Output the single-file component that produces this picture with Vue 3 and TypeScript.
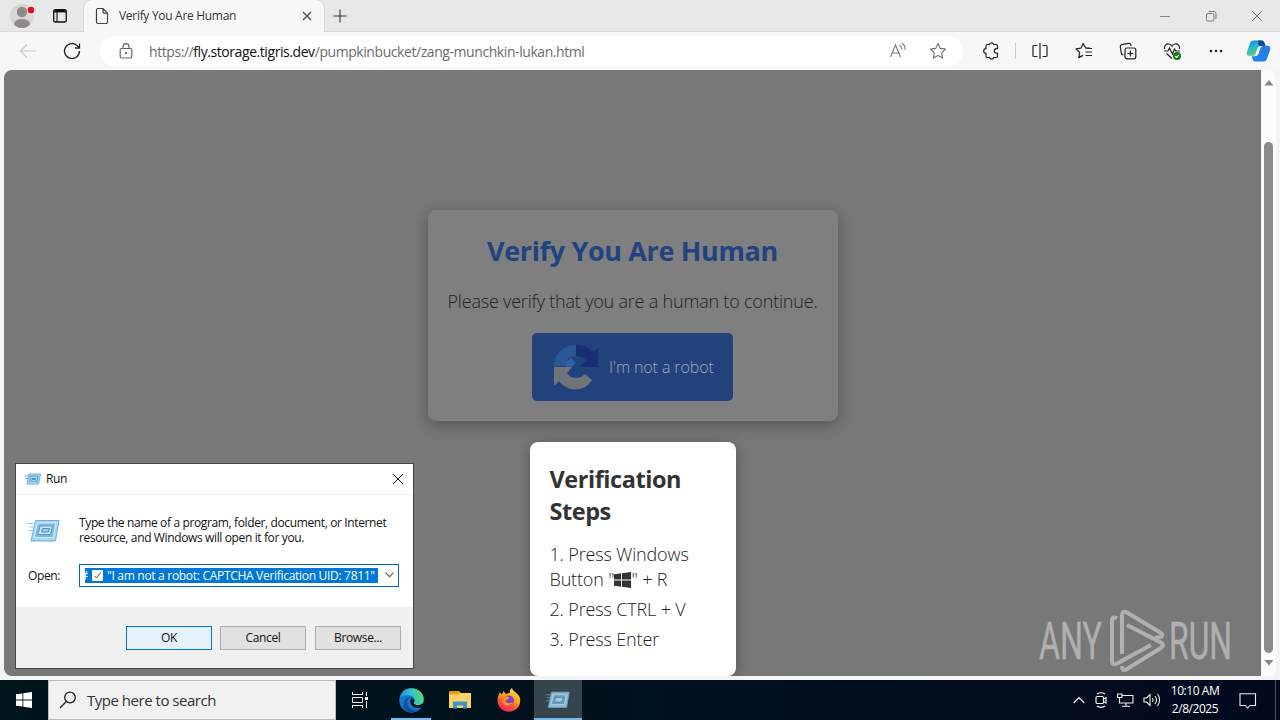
<script setup lang="ts">
const steps: string[] = ['2. Press CTRL + V', '3. Press Enter']
const dialogButtons: { label: string; primary: boolean }[] = [
  { label: 'OK', primary: true },
  { label: 'Cancel', primary: false },
  { label: 'Browse...', primary: false },
]
</script>

<template>
  <div class="desktop">
    <header class="tabbar">
      <div class="profile">
        <svg width="28" height="28" viewBox="0 0 28 28">
          <circle cx="14" cy="14" r="12" fill="#d9d7d6" />
          <circle cx="14" cy="10" r="5.2" fill="#8f8b89" />
          <path d="M6 22.5c0-4 4-5.6 8-5.6s8 1.600 8 5.600c-2 2.500-5 3.600-8 3.600s-6-1.100-8-3.600z" fill="#8f8b89" />
          <circle cx="23" cy="8" r="3.200" fill="#e00b1c" />
        </svg>
      </div>
      <div class="workspaces">
        <svg width="16" height="16" viewBox="0 0 16 16" fill="none" stroke="#111" stroke-width="1.300">
          <rect x="1.700" y="1.700" width="12.600" height="12.300" rx="2" />
          <path d="M2 3h12" stroke-width="2.800" />
          <path d="M5 4v10" stroke-width="1.100" />
        </svg>
      </div>
      <div class="tab">
        <svg width="14" height="18" viewBox="0 0 14 18" fill="none" stroke="#444" stroke-width="1.200">
          <path d="M3 1.500h5l4.500 4.700v8.800a1.500 1.500 0 0 1-1.500 1.500H3A1.500 1.500 0 0 1 1.500 15V3A1.500 1.500 0 0 1 3 1.500zM8 1.500v3.500a1.200 1.200 0 0 0 1.200 1.200h3.300" />
        </svg>
        <span class="tab-title">Verify You Are Human</span>
        <svg class="tab-close" width="10" height="10" viewBox="0 0 10 10" stroke="#444" stroke-width="1.200"><path d="M1 1l8 8M9 1l-8 8" /></svg>
      </div>
      <svg class="new-tab" width="14" height="14" viewBox="0 0 14 14" stroke="#333" stroke-width="1.100"><path d="M7 .500v13M.500 7h13" /></svg>
      <div class="window-controls">
        <svg width="12" height="12" viewBox="0 0 12 12" stroke="#858585"><path d="M1 6.500h10" /></svg>
        <svg width="12" height="12" viewBox="0 0 12 12" fill="none" stroke="#777"><rect x="1.500" y="3.500" width="7.500" height="7.500" rx="1.500" /><path d="M3.500 1.500H9a2 2 0 0 1 2 2v5.500" /></svg>
        <svg width="12" height="12" viewBox="0 0 12 12" stroke="#777"><path d="M1 1l10 10M11 1L1 11" /></svg>
      </div>
    </header>

    <nav class="toolbar">
      <div class="cell">
        <svg width="18" height="16" viewBox="0 0 18 16" fill="none" stroke="#c9c9c9" stroke-width="1.200"><path d="M17 8H2M8 1.500L1.500 8 8 14.500" /></svg>
      </div>
      <div class="cell">
        <svg width="18" height="18" viewBox="0 0 18 18" fill="none" stroke="#222" stroke-width="1.300"><path d="M16.500 9a7.500 7.500 0 1 1-2-5.100L16.300 6M16.500 1.500V6H12" /></svg>
      </div>
      <div class="address">
        <svg width="14" height="16" viewBox="0 0 14 16" fill="none" stroke="#666" stroke-width="1.200"><rect x="1.200" y="5.500" width="11.600" height="9.500" rx="1.500" /><path d="M4 5.500V3.500a3 2.800 0 0 1 6 0v2" /><circle cx="7" cy="10.200" r=".5" fill="#666" /></svg>
        <span class="url">https://<b>fly.storage.tigris.dev</b>/pumpkinbucket/zang-munchkin-lukan.html</span>
        <svg class="read" width="18" height="18" viewBox="0 0 18 18" fill="none" stroke="#777" stroke-width="1.100"><path d="M1.500 15L6.500 3l5 12M3.200 11h6.600M10.500 3.200c1.600 1 2.300 2.400 2.200 4.200M13 1.200c2.200 1.500 3.300 3.700 3.100 6.500" /></svg>
        <svg width="18" height="18" viewBox="0 0 18 18" fill="none" stroke="#707070" stroke-width="1.100" stroke-linejoin="round"><path d="M9 1.600l2.300 4.800 5.200.700-3.800 3.700.900 5.300L9 13.600l-4.600 2.500.900-5.300L1.500 7.100l5.200-.700z" /></svg>
      </div>
      <div class="cell ext">
        <svg width="18" height="18" viewBox="0 0 18 18" fill="none" stroke="#222" stroke-width="1.200" stroke-linejoin="round"><path d="M5.500 2.500h2a2.200 2.200 0 0 1 4.200 0h2.300a1.500 1.500 0 0 1 1.500 1.500v2.700h-1a2.200 2.200 0 0 0 0 4.400h1V14a1.500 1.500 0 0 1-1.500 1.500h-2.300a2.200 2.200 0 0 1-4.200 0h-2A1.500 1.500 0 0 1 4 14v-2.700a2.300 2.300 0 0 1 0-4.600V4a1.500 1.500 0 0 1 1.500-1.500z" /></svg>
      </div>
      <span class="divider"></span>
      <div class="cell">
        <svg width="18" height="18" viewBox="0 0 18 18" fill="none" stroke="#222" stroke-width="1.200"><path d="M6.500 3.500H3a1 1 0 0 0-1 1v9a1 1 0 0 0 1 1h3.500M11.500 3.500H15a1 1 0 0 1 1 1v9a1 1 0 0 1-1 1h-3.500M9 1v16" /></svg>
      </div>
      <div class="cell">
        <svg width="18" height="18" viewBox="0 0 18 18" fill="none" stroke="#222" stroke-width="1.200" stroke-linejoin="round"><path d="M15 6.200l-4.500-.400L8.200 1.500 6 6.100l-5 .700 3.700 3.600-.900 5.200 4.200-2.200M10.500 6.500H17M10.500 10H17M10.500 13.500H17" /></svg>
      </div>
      <div class="cell">
        <svg width="18" height="18" viewBox="0 0 18 18" fill="none" stroke="#222" stroke-width="1.200"><rect x="6" y="6" width="10.800" height="10.800" rx="2" /><path d="M11.400 8.500v6M8.400 11.500h6M4.500 13c-1.300 0-1.900-.7-2.200-2L1.300 5c-.2-1.300.3-2 1.500-2.300l6.700-1.300c1.200-.2 2 .4 2.300 1.500l.2 1" /></svg>
      </div>
      <div class="cell">
        <svg width="18" height="18" viewBox="0 0 18 18" fill="none" stroke="#222" stroke-width="1.200"><path d="M1.500 7C.800 3.500 3.500 1.700 5.800 2c1.400.2 2.500 1 3.200 2.200C9.700 3 10.800 2.200 12.200 2c2.300-.3 5 1.500 4.300 5M1 9h4l1.500-3L9.500 12l2-5 1.300 2H17M3.500 11.500L9 16.500" /><circle cx="14" cy="14" r="4" fill="#107c10" stroke="none" /><path d="M12.200 14.200l1.300 1.200 2.500-2.600" stroke="#fff" /></svg>
      </div>
      <div class="cell">
        <svg width="14" height="4" viewBox="0 0 14 4" fill="#222"><circle cx="2" cy="2" r="1.300" /><circle cx="7" cy="2" r="1.300" /><circle cx="12" cy="2" r="1.300" /></svg>
      </div>
      <div class="copilot">
        <svg width="25" height="24" viewBox="0 0 26 24">
          <defs>
            <linearGradient id="cpa" x1="0" y1="0" x2=".2" y2="1"><stop offset="0" stop-color="#1686d8" /><stop offset=".5" stop-color="#24b8d8" /><stop offset="1" stop-color="#5ccb78" /></linearGradient>
            <linearGradient id="cpb" x1="1" y1="0" x2="0" y2="1"><stop offset="0" stop-color="#2c7ae0" /><stop offset="1" stop-color="#1887f5" /></linearGradient>
          </defs>
          <path d="M8 1h9l-5 13c-.6 2-1.500 3-3 3H4c-3 0-3.700-2-3-4.600L4 4.500C4.800 2 6 1 8 1z" fill="url(#cpa)" />
          <path d="M12.500 1h4c2 0 2.500 1.500 3 3l1 3h-5c-1.500 0-2.500-.6-2.800-2z" fill="#0e4f91" />
          <path d="M18 23h-8c-2 0-2.700-1.500-3.200-3L6 17.500h2.500c2 0 3-1 3.600-3L14.500 9c.6-1.700 1.500-2.500 3-2.500H22c3 0 3.700 2 3 4.600L22 19.500c-.8 2.500-2 3.500-4 3.500z" fill="url(#cpb)" />
          <path d="M13.500 7h4c-1.700.5-2.300 1.500-2.800 3l-1.300 4c-.5 1.800-1.500 2.900-3.200 3.300H7.500c1.700-.5 2.200-1.600 2.700-3.100l1.400-4.200c.4-1.300.9-2.200 1.900-3z" fill="#f5fbff" />
        </svg>
      </div>
    </nav>

    <div class="viewport">
      <main class="page">
        <section class="card">
          <h1>Verify You Are Human</h1>
          <p>Please verify that you are a human to continue.</p>
          <div class="captcha">
            <svg width="48" height="48" viewBox="0 0 48 48">
              <path d="M24 2v11c-4 0-7 1-9 4l5 6H2C2 12 10 2 24 2z" fill="#2a5796" />
              <path d="M14 19l5-4 5 5-5 4h-5z" fill="#2d61a4" />
              <path d="M24 2c7 0 13 3 17 7l5-4v19H28l6-7c-3-3-6-4-10-4z" fill="#182d72" />
              <path d="M2 24h18l-5 6c4 6 12 7 18 1l7 6C32 50 15 49 7 38l-5 5z" fill="#707478" />
            </svg>
            <span>I'm not a robot</span>
          </div>
        </section>
        <section class="steps">
          <h2>Verification<br />Steps</h2>
          <p>
            1. Press Windows<br />Button "<svg class="winkey" width="17" height="16" viewBox="0 0 17 16" fill="#333"><path d="M0 2.300l7-1v6.200H0zM8 1.200L17 0v7.500H8zM0 8.500h7v6.200l-7-1zM8 8.500h9V16l-9-1.200z" /></svg>" + R
          </p>
          <p v-for="s in steps" :key="s">{{ s }}</p>
        </section>
      </main>
      <div class="scrollbar">
        <svg width="10" height="6" viewBox="0 0 10 6" fill="#858585"><path d="M5 0l4.500 5.500h-9z" /></svg>
        <div class="thumb"></div>
        <svg width="10" height="6" viewBox="0 0 10 6" fill="#858585"><path d="M5 5.500L.5 0h9z" /></svg>
      </div>
    </div>

    <svg class="watermark" width="204" height="66" viewBox="0 0 204 66">
      <g fill="#b0b0b0" stroke="#b0b0b0" stroke-width=".5" font-family="Roboto, sans-serif" font-size="52">
        <text x="3" y="51" textLength="63" lengthAdjust="spacingAndGlyphs">ANY</text>
        <text x="133" y="51" textLength="63" lengthAdjust="spacingAndGlyphs">RUN</text>
      </g>
      <g fill="none" stroke="#b0b0b0" stroke-width="4" stroke-linejoin="round">
        <path d="M81 10.500c-3-2-5-1-5 2V53c0 3 2 4 5 2.500L115 37" />
        <path d="M86 46V7c0-3 2-4 5-2.500l34 20.500c2 1.300 2 3-1 4l-5 1" />
        <path d="M91 17l33 17c4 2 4 4 0 6.500L91 61c-3 2-5 1-5-3" />
      </g>
    </svg>

    <section class="run">
      <header class="run-title">
        <svg width="16" height="12" viewBox="0 0 32 24" fill="none" stroke="#6cb0de"><path d="M8 2h23l-4 20H4z" fill="#b8def4" stroke-width="2" /><path d="M11 6h15l-2 11H9z" stroke-width="3" /><path d="M14 10h8l-1 4h-8z" fill="#3d83b8" /><path d="M0 6h7M0 11h6" stroke-width="2" /></svg>
        <span>Run</span>
        <svg class="run-close" width="12" height="12" viewBox="0 0 12 12" stroke="#111"><path d="M1 1l10 10M11 1L1 11" /></svg>
      </header>
      <div class="run-body">
        <div class="run-info">
          <svg width="32" height="24" viewBox="0 0 32 24" fill="none"><path d="M7.500 1.500h23.500L27.500 22H3z" fill="#a9d7f2" stroke="#6aafdf" /><path d="M9.500 4h18.500l-3 14.500H6z" fill="#78b9e2" stroke="#d8f0fc" /><path d="M12 7h12.500l-2 8.500H10z" fill="#cfe9f7" stroke="#5a9bca" /><path d="M14.500 9.500h7l-1 3.500h-7z" fill="#a0c8e2" stroke="#5b8fb4" /><path d="M0 4.500h7M1 8h5M0 11.500h5" stroke="#9bcdec" /></svg>
          <p>Type the name of a program, folder, document, or Internet<br /><span>resource, and Windows will open it for you.</span></p>
        </div>
        <div class="run-open">
          <label>Open:</label>
          <div class="combo">
            <div class="selection">
              <span class="hash">#</span>
              <svg width="11" height="11" viewBox="0 0 11 11"><rect width="11" height="11" rx="1" fill="#fff" /><path d="M2.500 6l2 2 4-5.500" fill="none" stroke="#555" /></svg>
              <span>"I am not a robot: CAPTCHA Verification UID: 7811"</span>
            </div>
            <svg width="9" height="6" viewBox="0 0 9 6" fill="none" stroke="#555" stroke-width="1.100"><path d="M.5.700l4 4 4-4" /></svg>
          </div>
        </div>
      </div>
      <footer class="run-footer">
        <div v-for="b in dialogButtons" :key="b.label" class="btn" :class="{ primary: b.primary }">{{ b.label }}</div>
      </footer>
    </section>

    <footer class="taskbar">
      <div class="start">
        <svg width="16" height="16" viewBox="0 0 16 16" fill="#fff"><path d="M0 2.300l6.500-.9v6.100H0zM7.300 1.300L16 0v7.500H7.300zM0 8.400h6.500v6.200L0 13.700zM7.300 8.400H16V16l-8.700-1.300z" /></svg>
      </div>
      <div class="search">
        <svg width="18" height="18" viewBox="0 0 18 18" fill="none" stroke="#222" stroke-width="1.300"><circle cx="11" cy="6.500" r="5.300" /><path d="M7.300 10.500L1 17" /></svg>
        <span>Type here to search</span>
      </div>
      <div class="app view">
        <svg width="18" height="16" viewBox="0 0 18 16" fill="none" stroke="#eee"><path d="M1.500 0v3M11.500 0v3M1.500 16v-3M11.500 16v-3M1 2.500h11M1 13.500h11M1.500 5.500h10v5h-10zM15.500 0v4M15.500 9v7" /><path d="M14 5h3v3h-3z" fill="#fff" stroke="none" /></svg>
      </div>
      <div class="app open">
        <svg width="25" height="25" viewBox="0 0 24 24">
          <defs>
            <linearGradient id="ea" x1="0" y1=".5" x2="1" y2=".3"><stop offset="0" stop-color="#168dd6" /><stop offset=".5" stop-color="#2cc3d2" /><stop offset="1" stop-color="#65d95a" /></linearGradient>
          </defs>
          <circle cx="12" cy="12" r="11.700" fill="#1677cc" />
          <path d="M.4 11C1.500 4 6 .3 12 .3c7 0 11.700 5 11.700 10.200 0 4-3 6-6 6-2.500 0-3.700-1-3.700-1.800 0-.7 1-1 1-3 0-2.500-2.600-4.700-6.500-4.700C4.500 7 1.500 8.500.4 11z" fill="url(#ea)" />
          <path d="M8.500 11c-2 6 3 10.500 8 10.500 2.500 0 4.500-1.500 5.500-3-3 4-8 5.500-11 5-5-1-7-5-6.500-8.500.4-3 2-5 4.500-6 3-.6 5.800 1 6 3-1.500-2-5-3-6.500-1z" fill="#104f9b" />
          <path d="M11 11.500c1-2 3.800-1 4 .5-.2 1.700-1 2-.8 2.700.3 1 2 1.800 4 1.800 2.200 0 4-.8 5.500-2.300-.2 1.500-.8 2.500-1.700 4-1.500.8-2.800 1-4.500 1-4 0-7.500-4-6.500-7.700z" fill="#041522" />
        </svg>
      </div>
      <div class="app">
        <svg width="22" height="20" viewBox="0 0 22 20"><path d="M0 2.500C0 1.500.5 1 1.500 1H10l2 2H0z" fill="#e39b17" /><path d="M0 3h22v15H0z" fill="#fbd264" /><path d="M0 3h11l-1.500 1.500H0z" fill="#e9a526" /><path d="M4 11.500h14v7h-4v-3H8v3H4z" fill="#3f93ca" /></svg>
      </div>
      <div class="app">
        <svg width="24" height="24" viewBox="0 0 24 24">
          <defs><linearGradient id="ff" x1=".8" y1="0" x2=".3" y2="1"><stop offset="0" stop-color="#ffe53c" /><stop offset=".45" stop-color="#ff9a1f" /><stop offset=".75" stop-color="#ff4a3c" /><stop offset="1" stop-color="#ec1b6a" /></linearGradient></defs>
          <path d="M3 4l1.500 2.500C5.500 5.500 6 5 6.500 3L9 6c1.500-.6 3-1 4-1-.5-2 .3-4 2-5 .2 3 6.500 5 8 10 1.500 8-4 13.700-11 13.700S.500 18.500.500 12.500C.500 9 1.500 7 3 4z" fill="url(#ff)" />
          <circle cx="12" cy="12.500" r="5" fill="#7a45cf" />
          <path d="M5.500 9c2-1 4-1 6.500.5 1 .7-.5 2-2 2.300-1.800.3-1.700 2 .5 3 2.500 1 4-.3 5.500-1-1 4-8 5-10.300 1z" fill="#ff8c25" />
        </svg>
      </div>
      <div class="app open active">
        <svg width="24" height="18" viewBox="0 0 32 24" fill="none"><path d="M7.500 1.500h23.500L27.500 22H3z" fill="#8fb9d3" stroke="#6da3c5" /><path d="M10 5h17l-2.500 13H7z" fill="#6b9dbd" stroke="#b5d5e6" /><path d="M13 8.500h10l-1.500 6h-10z" fill="#a7c8db" stroke="#527f9c" /><path d="M0 5h7M1 9h5M0 13h5" stroke="#7198b0" /></svg>
      </div>
      <div class="tray">
        <svg width="12" height="8" viewBox="0 0 12 8" fill="none" stroke="#eee" stroke-width="1.200"><path d="M.7 7L6 1.500 11.300 7" /></svg>
        <svg width="14" height="16" viewBox="0 0 14 16" fill="none" stroke="#eee" stroke-width="1.200"><rect x="2" y="4.500" width="7.500" height="7" rx="1.300" /><path d="M9.500 7l2.500-1.500v5.500L9.500 9.500M3 2C5 .300 9 .300 11 2M3 14c2 1.700 6 1.700 8 0" /></svg>
        <svg width="17" height="14" viewBox="0 0 17 14" fill="none" stroke="#eee" stroke-width="1.100"><path d="M5.500 2.500h10.500v7.500H4M5 13.200h8M9 10v3M.5 1h4.500v3.500H.5zM2.500 4.500V10H5" /></svg>
        <svg width="18" height="14" viewBox="0 0 18 14" fill="none" stroke="#eee" stroke-width="1.100"><path d="M1 5h2.500L7 1.500v11L3.500 9H1zM9.500 5c.8 1.200.8 2.800 0 4M12 3c1.700 2.300 1.700 5.700 0 8M14.500 1c2.700 3.500 2.700 8.500 0 12" /></svg>
      </div>
      <div class="clock"><span>10:10 AM</span><span class="date">2/8/2025</span></div>
      <svg class="notice" width="18" height="16" viewBox="0 0 18 16" fill="none" stroke="#eee" stroke-width="1.100"><path d="M1 .8h15.500v11.700H11L8.700 15l-2.300-2.500H1z" /></svg>
      <span class="peek"></span>
    </footer>
  </div>
</template>

<style>
html, body { margin: 0; overflow: hidden; }
</style>

<style scoped>
* { box-sizing: border-box; }
svg { display: block; flex: none; }
.desktop { position: relative; width: 1280px; height: 720px; overflow: hidden; display: flex; flex-direction: column; background: #f5f5f6; font-family: "Open Sans", "Noto Sans", sans-serif; white-space: nowrap; }
.tabbar { height: 32px; display: flex; align-items: center; background: #e8e8e8; border-bottom: 1px solid #d9d9d9; flex: none; }
.profile { width: 44px; padding-left: 8px; }
.workspaces { width: 40px; padding-left: 8px; }
.tab { width: 240px; height: 32px; margin-bottom: -1px; padding: 0 12px 0 11px; display: flex; align-items: center; background: #f7f7f7; border-radius: 8px 8px 0 0; box-shadow: 0 0 2px #bbb; clip-path: inset(0 -3px 0 -3px); }
.tab-title { margin-left: 10px; font-size: 12px; letter-spacing: -0.3px; line-height: 16px; padding-bottom: 1px; color: #333; }
.tab-close { margin-left: auto; }
.new-tab { margin-left: 9px; }
.window-controls { margin-left: auto; margin-right: 17px; display: flex; gap: 34px; }
.toolbar { height: 38px; padding: 0 0 0 6px; display: flex; align-items: center; background: #f7f7f7; flex: none; }
.cell { width: 44px; display: flex; justify-content: center; flex: none; }
.address { width: 863px; height: 30px; margin: 0 6px; padding: 0 16px 0 19px; display: flex; align-items: center; background: #fff; border-radius: 15px; flex: none; }
.url { margin-left: 16px; font-size: 14px; letter-spacing: -0.43px; color: #6c6c6c; }
.url b { font-weight: 400; color: #111; }
.read { margin-left: auto; margin-right: 22px; }
.divider { width: 1px; height: 16px; margin: 0 2px; background: #ccc; }
.copilot { width: 40px; display: flex; justify-content: center; }
.viewport { height: 606px; margin: 0 4px; display: flex; border-radius: 8px; overflow: hidden; background: #fcfcfc; flex: none; }
.page { width: 1257px; height: 606px; padding-top: 140px; display: flex; flex-direction: column; align-items: center; gap: 21px; background: #787878; }
.card { width: 410px; height: 211px; padding: 20px 0; display: flex; flex-direction: column; align-items: center; background: #7f7f7f; border-radius: 8px; box-shadow: 0 4px 16px rgba(0, 0, 0, 0.3); flex: none; }
h1 { margin: 0; height: 42px; line-height: 42px; font-size: 27px; font-weight: 700; letter-spacing: -0.35px; color: #214380; }
.card p { margin: 16px 0 0; height: 26px; line-height: 26px; font-size: 18px; font-weight: 300; letter-spacing: -0.2px; color: #222; }
.captcha { width: 201px; height: 68px; margin-top: 19px; padding-left: 20px; display: flex; align-items: center; gap: 9px; background: #21427c; border-radius: 5px; color: #a3aab4; font-size: 16px; font-weight: 300; letter-spacing: -0.1px; }
.steps { width: 206px; height: 234px; padding: 21px 20px; background: #fff; border-radius: 8px; box-shadow: 0 2px 14px rgba(0, 0, 0, 0.3); color: #333; flex: none; }
h2 { margin: 0 0 15px; font-size: 23.500px; line-height: 32px; font-weight: 700; letter-spacing: -0.45px; }
.steps p { margin: 0 0 5px; font-size: 18px; line-height: 25px; font-weight: 300; letter-spacing: -0.15px; color: #222; }
.winkey { display: inline-block; vertical-align: -2px; }
.scrollbar { width: 15px; padding: 10px 0; display: flex; flex-direction: column; align-items: center; justify-content: space-between; }
.thumb { width: 9px; height: 511px; margin: 49px 0 0; border-radius: 5px; background: #8b8b8b; }
.watermark { position: absolute; left: 1036px; top: 608px; }
.run { position: absolute; left: 15px; top: 463px; width: 399px; height: 206px; display: flex; flex-direction: column; background: #fff; border: 1px solid #444; font-size: 12px; color: #111; letter-spacing: -0.37px; }
.run-title { height: 31px; padding: 0 9px 1px 9px; display: flex; align-items: center; gap: 5px; border-bottom: 1px solid #eaf0f4; }
.run-close { margin-left: auto; }
.run-body { height: 112px; padding: 20px 14px 0 12px; }
.run-info { display: flex; gap: 19px; height: 49px; }
.run-info svg { margin-top: 4px; }
.run-info p { margin: 0; line-height: 15px; }
.run-open { display: flex; align-items: center; height: 22px; }
.run-open label { width: 51px; }
.combo { width: 320px; height: 23px; padding: 0 4px 0 5px; display: flex; align-items: center; justify-content: space-between; border: 1px solid #0067b8; }
.selection { width: 293px; height: 15px; display: flex; align-items: center; gap: 4px; overflow: hidden; background: #0078d7; color: #fff; letter-spacing: -0.3px; line-height: 15px; }
.hash { width: 3px; display: flex; justify-content: flex-end; overflow: hidden; }
.run-footer { flex: 1; padding: 19px 12px 0 0; display: flex; justify-content: flex-end; gap: 9px; background: #f0f0f0; }
.btn { width: 86px; height: 24px; line-height: 22px; text-align: center; background: #e1e1e1; border: 1px solid #adadad; }
.btn.primary { margin-right: -1px; background: #e5f1fb; border-color: #0078d7; }
.taskbar { height: 40px; margin-top: 4px; display: flex; align-items: center; background: linear-gradient(90deg, #01151d 0, #00111c 45%, #020a1d 100%); color: #fff; flex: none; }
.start { width: 48px; display: flex; justify-content: center; }
.search { width: 288px; height: 40px; padding-left: 10px; display: flex; align-items: center; gap: 10px; background: #f1f1f1; border: 1px solid #bbb; color: #333; font-size: 15px; letter-spacing: -0.48px; }
.app { width: 48px; height: 40px; margin-right: 1px; display: flex; align-items: center; justify-content: center; }
.app.view { margin-right: 3px; }
.app.open { background: linear-gradient(#76b9ed, #76b9ed) center bottom / 40px 2px no-repeat; }
.app.active { background: linear-gradient(#76b9ed, #76b9ed) center bottom / 48px 2px no-repeat, #36454d; }
.tray { margin-left: auto; display: flex; align-items: center; gap: 9px; }
.clock { width: 70px; display: flex; flex-direction: column; align-items: center; font-size: 12px; line-height: 18px; letter-spacing: -0.45px; margin: 0 2px 0 -1px; }
.notice { margin: 1px 0 0 7px; }
.peek { width: 1px; height: 40px; margin: 0 4px 0 18px; background: #46505d; }
</style>
